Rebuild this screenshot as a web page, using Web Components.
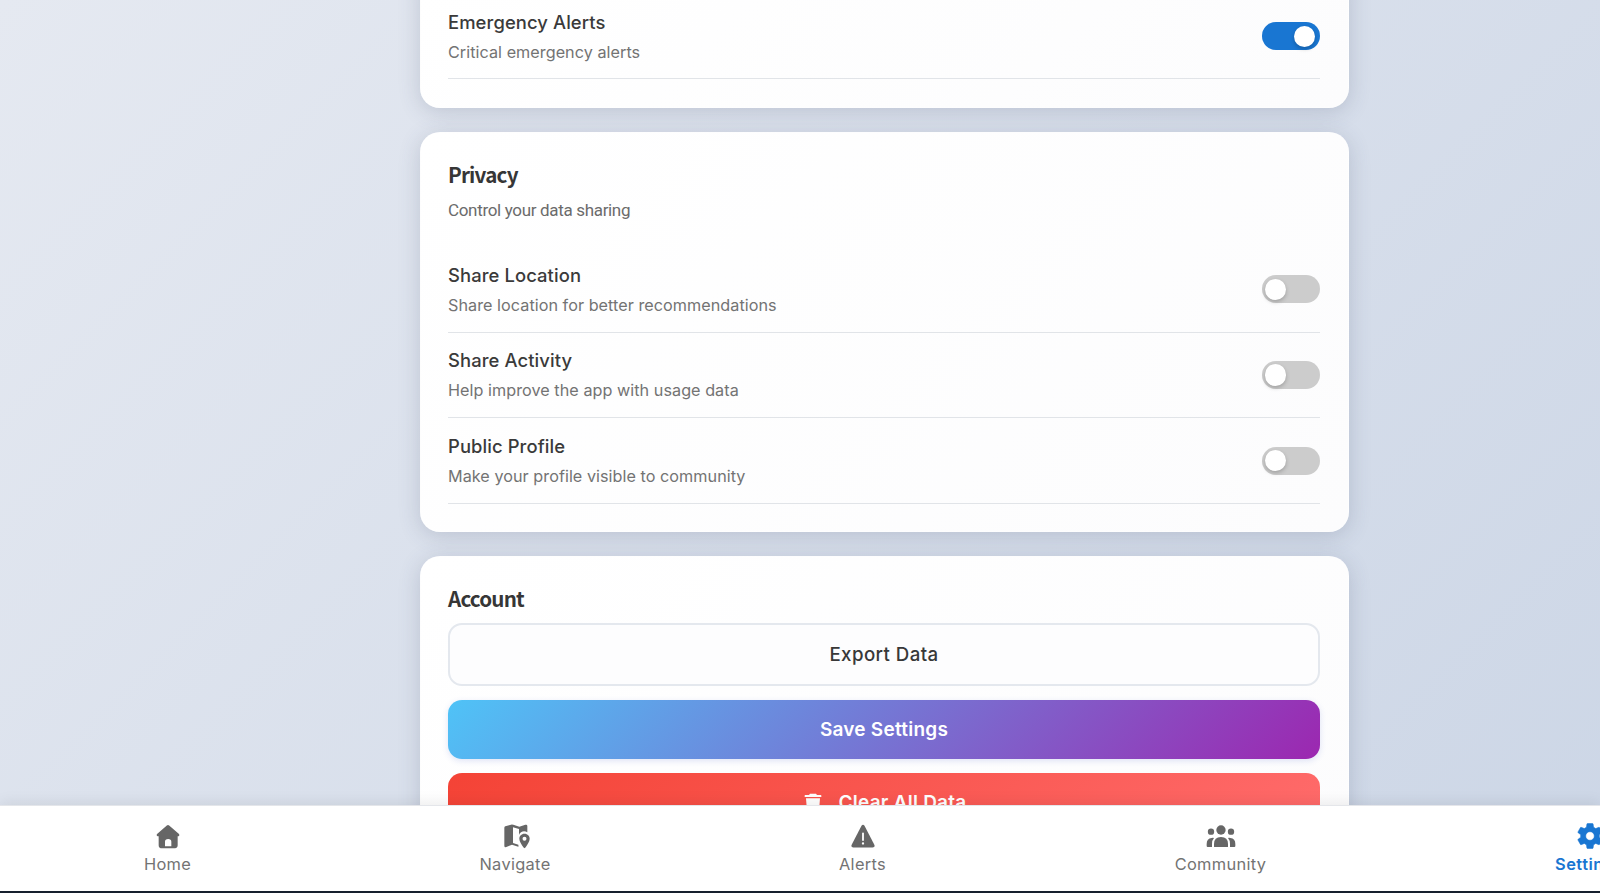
<!DOCTYPE html>
<html lang="en">
<head>
<meta charset="utf-8">
<title>Settings</title>
<style>
html,body{margin:0;height:100%;overflow:hidden}
body{font-family:Inter,"Liberation Sans",sans-serif;color:#333}
</style>
</head>
<body>
<settings-app></settings-app>
<script>
const define=(name,html,setup)=>customElements.define(name,class extends HTMLElement{
  constructor(){super();this.attachShadow({mode:'open'});}
  connectedCallback(){
    this.shadowRoot.innerHTML=html.replace(/\{(\w+)\}/g,(m,k)=>this.getAttribute(k)||'');
    if(setup)setup(this);
  }
});

const ICONS={
  home:`<svg width="24" height="25" viewBox="0 0 72 75"><path fill="currentColor" fill-rule="evenodd" d="M32.500 4.200Q36 1.500 39.500 4.200L69 30Q72 34 68 36.500Q66 37.500 65 36.500V64Q65 72.500 57 72.500H15Q8 72.500 8 64V36.500Q3 38 2 34Q1.500 31.500 4 29.500ZM27 67H46V53Q46 45 36.500 45Q27 45 27 53Z"/></svg>`,
  map:`<svg style="margin-left:3px" width="26" height="25" viewBox="0 0 78 75"><path fill="currentColor" d="M1 11Q1 8 4 7L21 2Q24 1 28 2.500L46 8L64 2.500Q70 1 70 6V25Q60 19 51 25Q46 28 45 33V15L27 10V57L43 62Q44 67 43 68L24 62L7 69Q1 71 1 65Z"/><path fill="currentColor" fill-rule="evenodd" d="M61.500 29C52 29 46 36 46 44C46 53 53 61 58 70Q61.500 75 65 70C70 61 77 53 77 44C77 36 71 29 61.500 29ZM61.500 38.500A6 6 0 1 1 61.500 50.500A6 6 0 1 1 61.500 38.500Z"/></svg>`,
  alert:`<svg style="margin-left:1px" width="26" height="25" viewBox="0 0 78 75"><path fill="currentColor" d="M34.500 5Q39 -1 43.500 5L73 62Q76 70 68 70.500H10Q2 70 5 62Z"/><path d="M39 28V48" stroke="#fff" stroke-width="5.500" stroke-linecap="round"/><circle cx="39" cy="58.500" r="3.500" fill="#fff"/></svg>`,
  people:`<svg width="30" height="25" viewBox="0 -2 90 75"><g fill="currentColor"><circle cx="45" cy="16" r="14"/><circle cx="15" cy="21" r="9.500"/><circle cx="75" cy="21" r="9.500"/><path d="M24 66V58Q24 37 45 37T66 58V66Q66 67 63 67H27Q24 67 24 66Z"/><path d="M18 67H5Q2 67 2 64V58Q2 41 17 40Q21 39 24 40Q17 48 18 58ZM72 67H85Q88 67 88 64V58Q88 41 73 40Q69 39 66 40Q73 48 72 58Z"/></g></svg>`,
  gear:`<svg width="26" height="26" viewBox="2 2 20 20"><path fill="currentColor" stroke="currentColor" stroke-width=".4" d="M19.140 12.940c.04-.3.06-.61.06-.94 0-.32-.02-.64-.07-.94l2.030-1.580c.18-.14.23-.41.12-.61l-1.920-3.320c-.12-.22-.37-.29-.59-.22l-2.390.96c-.5-.38-1.030-.7-1.620-.94l-.36-2.540c-.04-.24-.24-.41-.48-.41h-3.840c-.24 0-.43.17-.47.41l-.36 2.540c-.59.24-1.130.57-1.620.94l-2.390-.96c-.22-.08-.47 0-.59.22L2.740 8.870c-.12.21-.08.47.12.61l2.030 1.580c-.05.3-.09.63-.09.94s.02.64.07.94l-2.030 1.580c-.18.14-.23.41-.12.61l1.920 3.320c.12.22.37.29.59.22l2.390-.96c.5.38 1.030.7 1.620.94l.36 2.540c.05.24.24.41.48.41h3.840c.24 0 .44-.17.47-.41l.36-2.540c.59-.24 1.130-.56 1.620-.94l2.390.96c.22.08.47 0 .59-.22l1.920-3.320c.12-.22.07-.47-.12-.61l-2.010-1.580zM12 15.300A3.300 3.300 0 1 1 12 8.700a3.300 3.300 0 0 1 0 6.600z"/></svg>`,
  trash:`<svg width="18" height="20" viewBox="0 0 54 60"><path fill="currentColor" d="M18 2H36L39 6H51Q52 6 52 9V12H2V9Q2 6 3 6H15ZM6 16H48L45 54Q45 59 40 59H14Q9 59 9 54Z"/></svg>`
};

define('ui-icon','<style>:host{display:flex;align-items:center;justify-content:center}svg{display:block}</style>',
  el=>el.shadowRoot.innerHTML+=ICONS[el.getAttribute('name')]);

define('toggle-switch',`<style>
:host{display:block;width:58.500px;height:28px;border-radius:14px;background:#ccc;flex:none;box-sizing:border-box;padding:3.500px}
i{display:block;width:21.200px;height:21.200px;border-radius:50%;background:#fff;box-shadow:0 2px 4px rgba(0,0,0,.22)}
:host([on]){background:#1976d2}:host([on]) i{margin-left:29.300px}
</style><i></i>`);

define('setting-row',`<style>
:host{display:flex;align-items:center;justify-content:space-between;height:85.670px;box-sizing:border-box;border-bottom:1px solid #e1e4e8}
div{padding-top:var(--row-shift,0)}
h3{margin:0 0 3px;font-size:18.400px;line-height:28px;font-weight:500;letter-spacing:.1px;color:#3a3a3a}
p{margin:0;font-size:16.200px;line-height:26px;letter-spacing:.040px;color:#737373}
</style><div><h3>{label}</h3><p>{hint}</p></div><slot></slot>`);

define('settings-card',`<style>
:host{display:block;box-sizing:border-box;width:929px;padding:28px 27.500px;border:1px solid rgba(255,255,255,.3);border-radius:20px;background:linear-gradient(135deg,#fff,#fcfcfd);box-shadow:0 4px 22px rgba(60,70,100,.2);flex:none}
</style><slot></slot>`);

define('card-heading',`<style>
:host{display:flow-root}
h2{margin:-2.500px 0 0;font:700 20.600px/31px "Noto Sans CJK SC",sans-serif;letter-spacing:-.8px;color:#363636}
p{margin:8px 0 0;font:400 17px/24px Roboto,sans-serif;letter-spacing:-.330px;color:#6b6b6b}p:empty{display:none}
</style><h2>{label}</h2><p>{hint}</p>`);

define('action-button',`<style>
:host{display:block}
button{display:flex;align-items:center;justify-content:center;gap:16.500px;width:100%;height:59.500px;box-sizing:border-box;border:0;border-radius:14px;font:600 19px Inter,sans-serif;letter-spacing:.24px;color:#fff;padding:0}
:host([kind=outline]) button{height:63px;background:#fdfdfe;border:2px solid #e4e8ee;color:#383838;font-weight:500;font-size:18.700px;letter-spacing:.42px}
:host([kind=primary]) button{background:linear-gradient(135deg,#4fc3f7,#9c27b0);box-shadow:0 2px 6px rgba(60,90,200,.16)}
:host([kind=danger]) button{background:linear-gradient(135deg,#f44336,#ff6b6b);padding-left:2.500px}
</style><button><slot></slot></button>`);

define('nav-item',`<style>
:host{display:flex;flex-direction:column;align-items:center;color:#666}
ui-icon{height:26px;margin-top:17px}
span{margin-top:4px;font-size:16.400px;line-height:22px;letter-spacing:.32px;white-space:nowrap;color:#737373}
:host([active]){color:#1976d2}:host([active]) span{color:#1976d2;font-weight:600;letter-spacing:.5px}
</style><ui-icon name="{icon}"></ui-icon><span>{label}</span>`);

define('bottom-nav',`<style>
:host{display:grid;grid-template-columns:335px 360px 335px 381px 357px;height:88px;box-sizing:border-box;background:#fff;border-top:1px solid #e4e6ea;border-bottom:2px solid #17202e;box-shadow:0 -2px 14px rgba(0,0,0,.08);overflow:hidden}
</style><slot></slot>`);

define('settings-app',`<style>
:host{display:grid;grid-template-rows:805px 88px;height:893px;overflow:hidden;background:linear-gradient(135deg,#e5e9f1,#ccd6e6)}
main{display:flex;flex-direction:column;justify-content:flex-start;gap:24px;padding-left:419.500px;overflow:hidden;min-height:0}
.first{margin-top:-35.200px;--row-shift:1.400px}
.privacy{height:400px}
.privacy card-heading{height:85.400px}
.account{height:400px}
.account card-heading{height:37.200px}
action-button+action-button{margin-top:14px}
bottom-nav{position:relative}
</style>
<main>
<settings-card class="first"><setting-row label="Emergency Alerts" hint="Critical emergency alerts"><toggle-switch on></toggle-switch></setting-row></settings-card>
<settings-card class="privacy"><card-heading label="Privacy" hint="Control your data sharing"></card-heading>
<setting-row label="Share Location" hint="Share location for better recommendations"><toggle-switch></toggle-switch></setting-row>
<setting-row label="Share Activity" hint="Help improve the app with usage data"><toggle-switch></toggle-switch></setting-row>
<setting-row label="Public Profile" hint="Make your profile visible to community"><toggle-switch></toggle-switch></setting-row></settings-card>
<settings-card class="account"><card-heading label="Account"></card-heading>
<action-button kind="outline">Export Data</action-button><action-button kind="primary">Save Settings</action-button><action-button kind="danger"><ui-icon name="trash"></ui-icon><span>Clear All Data</span></action-button></settings-card>
</main>
<bottom-nav><nav-item icon="home" label="Home"></nav-item><nav-item icon="map" label="Navigate"></nav-item><nav-item icon="alert" label="Alerts"></nav-item><nav-item icon="people" label="Community"></nav-item><nav-item icon="gear" label="Settings" active></nav-item></bottom-nav>`);
</script>
</body>
</html>
